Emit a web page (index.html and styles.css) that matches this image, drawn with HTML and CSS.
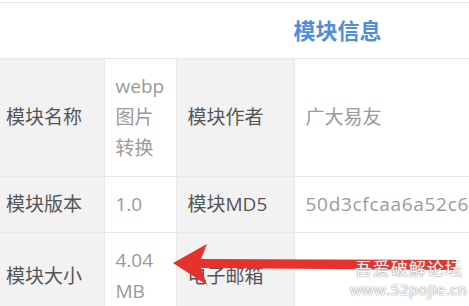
FILE: index.html
```html
<!DOCTYPE html>
<html lang="zh-CN">
<head>
    <meta charset="UTF-8">
    <meta name="viewport" content="width=device-width, initial-scale=1.0">
    <title>模块信息</title>
    <link rel="stylesheet" href="styles.css">
</head>
<body>
    <div class="page">
        <table class="info">
            <colgroup>
                <col class="c-label">
                <col class="c-value">
                <col class="c-label2">
                <col class="c-value2">
            </colgroup>
            <tr>
                <th colspan="4" class="title">模块信息</th>
            </tr>
            <tr class="tall">
                <td class="label">模块名称</td>
                <td class="value">webp图片转换</td>
                <td class="label">模块作者</td>
                <td class="value">广大易友</td>
            </tr>
            <tr>
                <td class="label">模块版本</td>
                <td class="value">1.0</td>
                <td class="label">模块MD5</td>
                <td class="value nowrap">50d3cfcaa6a52c6</td>
            </tr>
            <tr>
                <td class="label">模块大小</td>
                <td class="value">4.04 MB</td>
                <td class="label">电子邮箱</td>
                <td class="value"></td>
            </tr>
        </table>

        <!-- red pointer drawn over the table -->
        <svg class="arrow" width="469" height="306" viewBox="0 0 469 306">
            <polygon points="173,263 207,244 201,259 456,260 455,270 201,268 207,285" fill="#e7312c"/>
        </svg>

        <div class="mark">
            <div class="mark-name">吾爱破解论坛</div>
            <div class="mark-url">www.52pojie.cn</div>
        </div>
    </div>
</body>
</html>
```

FILE: styles.css
```css
body {
    margin: 0;
    padding: 0;
    background-color: #ffffff;
    font-family: "Open Sans", "Noto Sans CJK SC", sans-serif;
    overflow: hidden;
}

.page {
    position: relative;
    width: 469px;
    height: 306px;
    overflow: hidden;
    padding-top: 2px;
    box-sizing: border-box;
}

.info {
    width: 676px;
    table-layout: fixed;
    border-collapse: collapse;
    font-size: 19px;
    line-height: 31px;
}

.c-label { width: 104px; }
.c-value { width: 72px; }
.c-label2 { width: 118px; }

.info th,
.info td {
    border: 1px solid #e8e8e8;
    text-align: left;
    vertical-align: middle;
    padding: 12px 11px;
}

.info th.title {
    text-align: center;
    font-size: 22px;
    font-weight: bold;
    color: #4f8fda;
    border-left: none;
    padding: 12px 0;
}

.info td.label {
    background-color: #f2f2f2;
    color: #555555;
}

.info td:first-child {
    border-left: none;
    padding-left: 6px;
}

.info td.value {
    background-color: #ffffff;
    color: #9a9a9a;
}

.nowrap {
    white-space: nowrap;
    overflow: hidden;
    letter-spacing: 0.7px;
}

.arrow {
    position: absolute;
    left: 0;
    top: 0;
}

.mark {
    position: absolute;
    left: 350px;
    top: 258px;
    color: #ffffff;
    text-shadow: 0 0 2px #8a8a8a, 0 0 1px #8a8a8a;
    text-align: center;
    opacity: 0.9;
}

.mark-name {
    font-size: 17px;
    line-height: 22px;
    letter-spacing: 1px;
}

.mark-url {
    font-size: 15px;
    line-height: 18px;
    letter-spacing: 0.5px;
}
```
